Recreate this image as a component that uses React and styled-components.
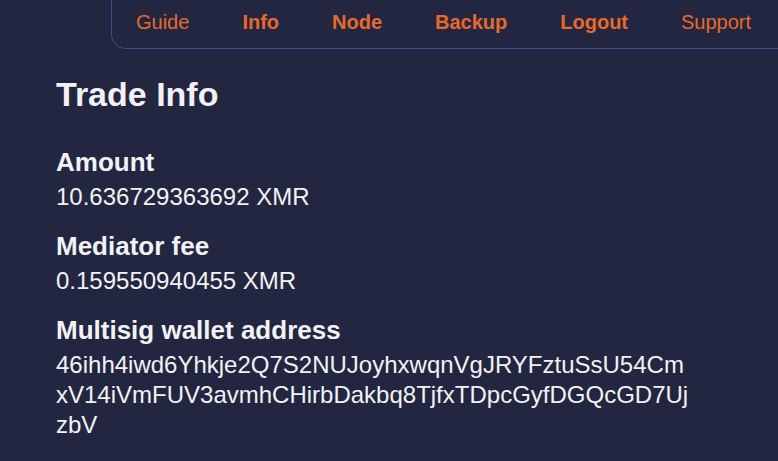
import React from "react";
import styled, { createGlobalStyle } from "styled-components";

const Global = createGlobalStyle`
  html, body { margin: 0; padding: 0; background: #222640; }
  body { font-family: "Liberation Sans", Arial, Helvetica, sans-serif; color: #f2f2f4; }
  * { box-sizing: border-box; }
`;

const Page = styled.div`
  width: 778px;
  height: 461px;
  background: #222640;
  overflow: hidden;
`;

const Header = styled.header`
  display: flex;
  justify-content: flex-end;
`;

const Nav = styled.nav`
  display: flex;
  align-items: center;
  gap: 53px;
  width: 667px;
  height: 49px;
  padding: 0 0 4px 24px;
  border-left: 1px solid #434f8c;
  border-bottom: 1px solid #434f8c;
  border-bottom-left-radius: 15px;
`;

const NavLink = styled.a`
  color: #e8692c;
  font-size: 20px;
  font-weight: ${(p) => (p.$bold ? 700 : 400)};
  text-decoration: none;
  line-height: 24px;
  white-space: nowrap;
`;

const Main = styled.main`
  padding: 0 0 0 56px;
  width: 692px;
`;

const Title = styled.h1`
  margin: 25px 0 0;
  font-size: 34px;
  line-height: 40px;
  font-weight: 700;
`;

const Field = styled.section`
  margin-top: ${(p) => p.$top}px;
`;

const Label = styled.h2`
  margin: 0;
  font-size: 26px;
  line-height: 32px;
  font-weight: 700;
`;

const Value = styled.div`
  font-size: 24px;
  line-height: 30px;
  margin-top: 4px;
  word-break: break-all;
`;

const links = [
  { text: "Guide", bold: false },
  { text: "Info", bold: true },
  { text: "Node", bold: true },
  { text: "Backup", bold: true },
  { text: "Logout", bold: true },
  { text: "Support", bold: false },
];

const fields = [
  { label: "Amount", value: "10.636729363692 XMR", top: 32 },
  { label: "Mediator fee", value: "0.159550940455 XMR", top: 18 },
  {
    label: "Multisig wallet address",
    value:
      "46ihh4iwd6Yhkje2Q7S2NUJoyhxwqnVgJRYFztuSsU54CmxV14iVmFUV3avmhCHirbDakbq8TjfxTDpcGyfDGQcGD7UjzbV",
    top: 18,
  },
];

export default function App() {
  return (
    <Page>
      <Global />
      <Header>
        <Nav>
          {links.map((l) => (
            <NavLink key={l.text} href="#" $bold={l.bold}>
              {l.text}
            </NavLink>
          ))}
        </Nav>
      </Header>
      <Main>
        <Title>Trade Info</Title>
        {fields.map((f) => (
          <Field key={f.label} $top={f.top}>
            <Label>{f.label}</Label>
            <Value>{f.value}</Value>
          </Field>
        ))}
      </Main>
    </Page>
  );
}
